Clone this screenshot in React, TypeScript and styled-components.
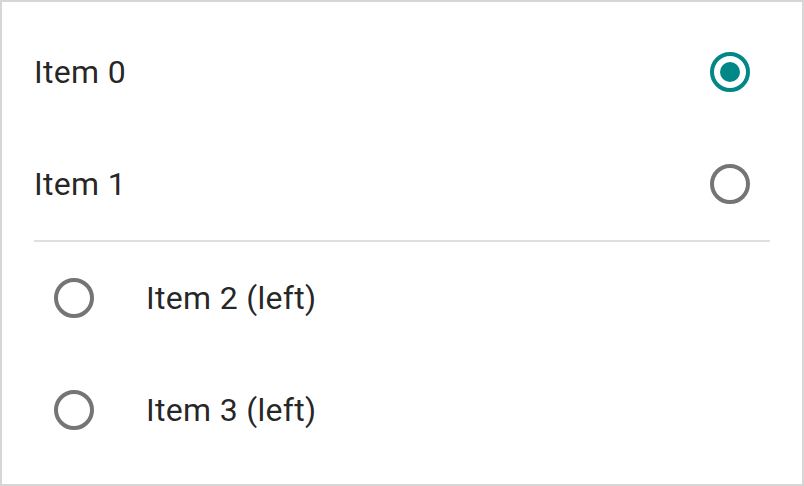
import styled, { createGlobalStyle } from "styled-components";

const GlobalStyle = createGlobalStyle`
  html, body {
    margin: 0;
    padding: 0;
    background: #ffffff;
  }
  body {
    font-family: Roboto, "Noto Sans", "Liberation Sans", sans-serif;
  }
`;

const Frame = styled.div`
  box-sizing: border-box;
  width: 804px;
  height: 486px;
  border: 2px solid #d6d6d6;
  padding: 14px 0;
  background: #ffffff;
`;

const Group = styled.ul`
  list-style: none;
  margin: 0;
  padding: 0;
`;

const Row = styled.li`
  display: flex;
  align-items: center;
  height: 112px;
  padding: 0 32px;
  font-size: 32px;
  letter-spacing: 0.3px;
  color: rgba(0, 0, 0, 0.87);
`;

const Label = styled.span`
  flex: 1;
`;

const Divider = styled.hr`
  margin: 0 32px;
  border: none;
  border-bottom: 2px solid #e0e0e0;
  height: 0;
`;

const RadioBox = styled.span<{ $left?: boolean }>`
  display: flex;
  align-items: center;
  justify-content: center;
  width: 80px;
  height: 80px;
  margin-right: ${(p) => (p.$left ? "32px" : "0")};
`;

const Ring = styled.span<{ $checked?: boolean }>`
  box-sizing: border-box;
  display: flex;
  align-items: center;
  justify-content: center;
  width: 40px;
  height: 40px;
  border-radius: 50%;
  border: 4px solid ${(p) => (p.$checked ? "#018786" : "#757575")};
`;

const Dot = styled.span`
  width: 20px;
  height: 20px;
  border-radius: 50%;
  background: #018786;
`;

const Radio = ({ checked, left }: { checked?: boolean; left?: boolean }) => (
  <RadioBox $left={left}>
    <Ring $checked={checked}>{checked && <Dot />}</Ring>
  </RadioBox>
);

const App = () => {
  return (
    <>
      <GlobalStyle />
      <Frame>
        <Group>
          <Row>
            <Label>Item 0</Label>
            <Radio checked />
          </Row>
          <Row>
            <Label>Item 1</Label>
            <Radio />
          </Row>
        </Group>
        <Divider />
        <Group>
          <Row>
            <Radio left />
            <Label>Item 2 (left)</Label>
          </Row>
          <Row>
            <Radio left />
            <Label>Item 3 (left)</Label>
          </Row>
        </Group>
      </Frame>
    </>
  );
};

export default App;
